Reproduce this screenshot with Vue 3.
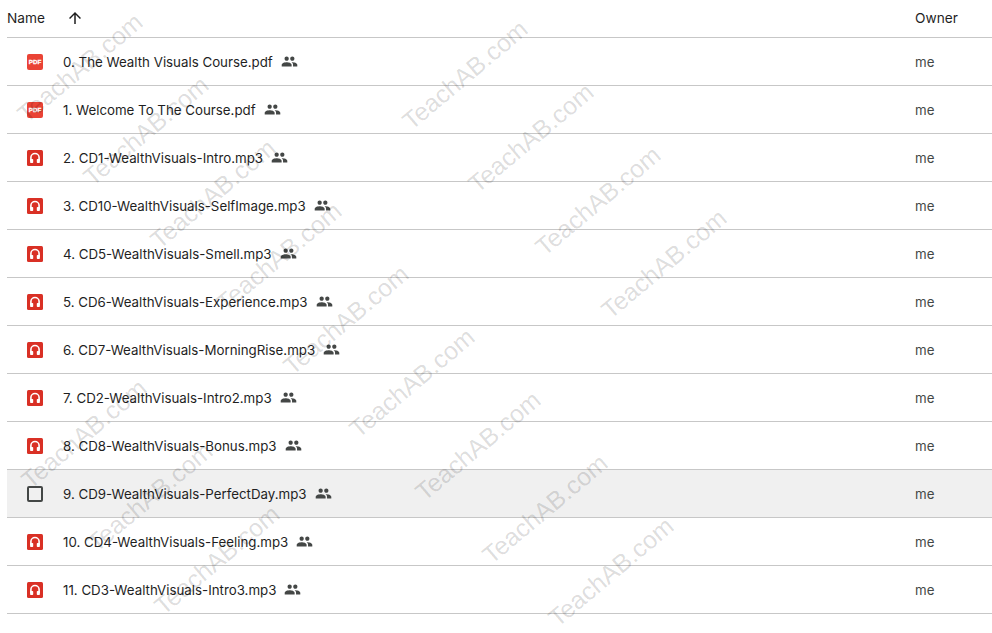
<script setup>
const files = [
  { name: '0. The Wealth Visuals Course.pdf', type: 'pdf' },
  { name: '1. Welcome To The Course.pdf', type: 'pdf' },
  { name: '2. CD1-WealthVisuals-Intro.mp3', type: 'audio' },
  { name: '3. CD10-WealthVisuals-SelfImage.mp3', type: 'audio' },
  { name: '4. CD5-WealthVisuals-Smell.mp3', type: 'audio' },
  { name: '5. CD6-WealthVisuals-Experience.mp3', type: 'audio' },
  { name: '6. CD7-WealthVisuals-MorningRise.mp3', type: 'audio' },
  { name: '7. CD2-WealthVisuals-Intro2.mp3', type: 'audio' },
  { name: '8. CD8-WealthVisuals-Bonus.mp3', type: 'audio' },
  { name: '9. CD9-WealthVisuals-PerfectDay.mp3', type: 'check' },
  { name: '10. CD4-WealthVisuals-Feeling.mp3', type: 'audio' },
  { name: '11. CD3-WealthVisuals-Intro3.mp3', type: 'audio' },
]
const marks = []
const columns = [
  { x: 80, y: 68, n: 9 },
  { x: 465, y: 75, n: 4 },
  { x: 84, y: 434, n: 3 },
]
for (const c of columns) {
  for (let i = 0; i < c.n; i++) marks.push({ x: c.x + i * 66.4, y: c.y + i * 63 })
}
const peoplePath = 'M16 11c1.66 0 2.99-1.34 2.99-3S17.66 5 16 5c-1.66 0-3 1.34-3 3s1.34 3 3 3zm-8 0c1.66 0 2.99-1.34 2.99-3S9.66 5 8 5C6.34 5 5 6.34 5 8s1.34 3 3 3zm0 2c-2.33 0-7 1.17-7 3.5V19h14v-2.5c0-2.33-4.67-3.5-7-3.5zm8 0c-.29 0-.62.02-.97.05 1.16.84 1.97 1.97 1.97 3.45V19h6v-2.5c0-2.33-4.67-3.5-7-3.5z'
</script>

<template>
  <div class="page">
    <div class="table">
      <div class="row head">
        <div class="name-col">
          <span class="head-name">Name</span>
          <svg class="arrow" viewBox="0 0 24 24" width="18" height="18">
            <path d="M4 12l1.41 1.41L11 7.83V20h2V7.83l5.58 5.59L20 12l-8-8-8 8z" fill="#1f1f1f" />
          </svg>
        </div>
        <div class="owner-col">Owner</div>
      </div>
      <div v-for="f in files" :key="f.name" class="row file" :class="{ hover: f.type === 'check' }">
        <div class="name-col">
          <div class="icon-cell">
            <span v-if="f.type === 'pdf'" class="pdf">PDF</span>
            <svg v-else-if="f.type === 'audio'" viewBox="0 0 16 16" width="16" height="16">
              <rect width="16" height="16" rx="1.5" fill="#d93025" />
              <path d="M3.9 11V7.6a4.1 4.1 0 0 1 8.2 0V11" fill="none" stroke="#fff" stroke-width="1.6" />
              <rect x="3.1" y="9" width="3.1" height="4" rx=".7" fill="#fff" />
              <rect x="9.8" y="9" width="3.1" height="4" rx=".7" fill="#fff" />
            </svg>
            <span v-else class="check"></span>
          </div>
          <span class="file-name">{{ f.name }}</span>
          <svg class="people" viewBox="0 0 24 24" width="17" height="17">
            <path :d="peoplePath" fill="#444746" />
          </svg>
        </div>
        <div class="owner-col owner">me</div>
      </div>
    </div>
    <div class="marks">
      <span
        v-for="(m, i) in marks"
        :key="i"
        class="mark"
        :style="{ left: m.x + 'px', top: m.y + 'px' }"
      >TeachAB.com</span>
    </div>
  </div>
</template>

<style scoped>
.page {
  position: relative;
  width: 992px;
  height: 633px;
  overflow: hidden;
  background: #fff;
  font-family: Inter, Roboto, "Liberation Sans", sans-serif;
  font-size: 13.3px;
}
.table {
  margin-left: 7px;
}
.row {
  display: flex;
  align-items: center;
  border-bottom: 1px solid #c7c7c7;
  box-sizing: border-box;
}
.head {
  height: 38px;
  padding-bottom: 2px;
  font-size: 13.7px;
  color: #1f1f1f;
}
.file {
  height: 48px;
  color: #444746;
}
.hover {
  background: #f0f0f0;
}
.name-col {
  display: flex;
  align-items: center;
  width: 908px;
}
.head-name {
  width: 59px;
}
.icon-cell {
  display: flex;
  justify-content: center;
  width: 56px;
}
.pdf {
  display: flex;
  align-items: center;
  justify-content: center;
  width: 16px;
  height: 16px;
  border-radius: 2px;
  background: #ea4335;
  color: #fff;
  font-family: "Liberation Sans", sans-serif;
  font-size: 6.2px;
  font-weight: 700;
  -webkit-text-stroke: 0.3px #fff;
}
.check {
  box-sizing: border-box;
  width: 16px;
  height: 16px;
  border: 2px solid #444746;
  border-radius: 2px;
}
.file-name {
  color: #1f1f1f;
  margin-right: 8px;
}
.owner {
  color: #444746;
}
.marks {
  position: absolute;
  inset: 0;
  pointer-events: none;
}
.mark {
  position: absolute;
  transform: translate(-50%, -50%) rotate(-40deg);
  font-family: "Liberation Sans", sans-serif;
  font-size: 25px;
  color: rgba(0, 0, 0, 0.14);
  white-space: nowrap;
}
</style>
